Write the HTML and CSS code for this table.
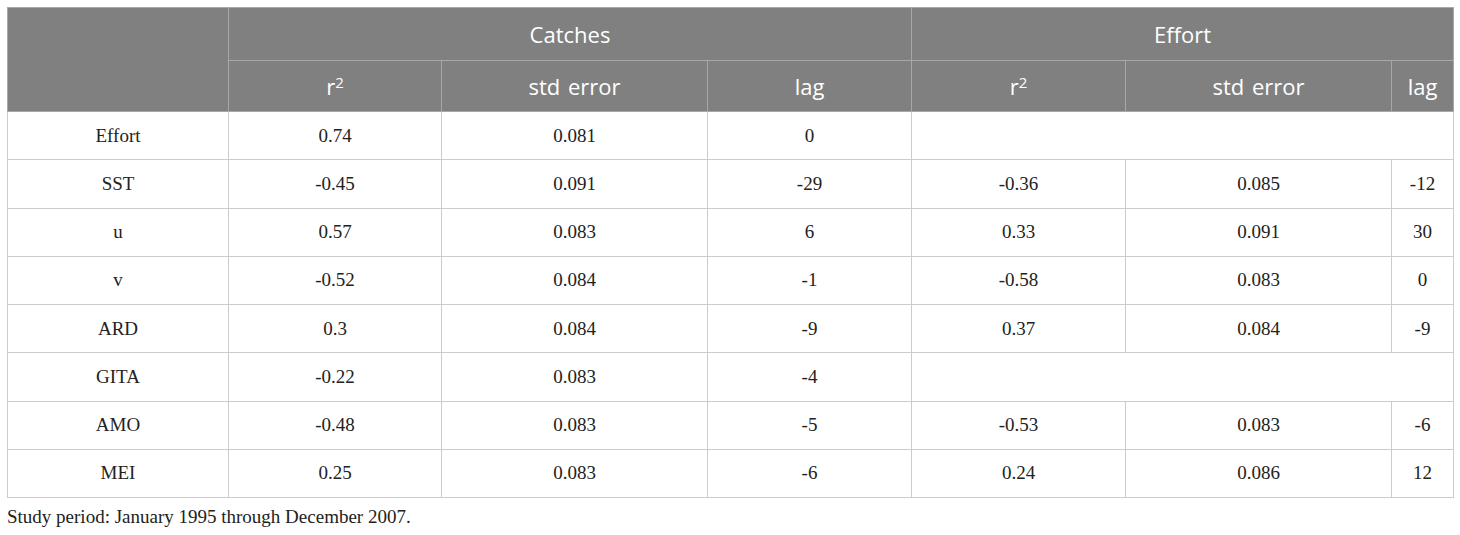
FILE: index.html
```html
<!DOCTYPE html>
<html>
<head>
<meta charset="utf-8">
<link rel="stylesheet" href="styles.css">
</head>
<body>
<div class="wrap">
<table class="data">
  <colgroup>
    <col class="c0"><col class="c1"><col class="c2"><col class="c3"><col class="c4"><col class="c5"><col class="c6">
  </colgroup>
  <thead>
    <tr class="h1">
      <th rowspan="2"></th>
      <th colspan="3">Catches</th>
      <th colspan="3">Effort</th>
    </tr>
    <tr class="h2">
      <th>r<sup>2</sup></th>
      <th>std error</th>
      <th>lag</th>
      <th>r<sup>2</sup></th>
      <th>std error</th>
      <th>lag</th>
    </tr>
  </thead>
  <tbody>
    <tr><td>Effort</td><td>0.74</td><td>0.081</td><td>0</td><td colspan="3"></td></tr>
    <tr><td>SST</td><td>-0.45</td><td>0.091</td><td>-29</td><td>-0.36</td><td>0.085</td><td>-12</td></tr>
    <tr><td>u</td><td>0.57</td><td>0.083</td><td>6</td><td>0.33</td><td>0.091</td><td>30</td></tr>
    <tr><td>v</td><td>-0.52</td><td>0.084</td><td>-1</td><td>-0.58</td><td>0.083</td><td>0</td></tr>
    <tr><td>ARD</td><td>0.3</td><td>0.084</td><td>-9</td><td>0.37</td><td>0.084</td><td>-9</td></tr>
    <tr><td>GITA</td><td>-0.22</td><td>0.083</td><td>-4</td><td colspan="3"></td></tr>
    <tr><td>AMO</td><td>-0.48</td><td>0.083</td><td>-5</td><td>-0.53</td><td>0.083</td><td>-6</td></tr>
    <tr><td>MEI</td><td>0.25</td><td>0.083</td><td>-6</td><td>0.24</td><td>0.086</td><td>12</td></tr>
  </tbody>
</table>
<p class="note">Study period: January 1995 through December 2007.</p>
</div>
</body>
</html>
```
FILE: styles.css
```css
html, body {
  margin: 0;
  padding: 0;
  background: #ffffff;
}
.wrap {
  padding: 7px 0 0 7px;
}
.data {
  border-collapse: collapse;
  table-layout: fixed;
  width: 1446px;
}
.c0 { width: 221px; }
.c1 { width: 213px; }
.c2 { width: 266px; }
.c3 { width: 204px; }
.c4 { width: 214px; }
.c5 { width: 266px; }
.c6 { width: 62px; }
.data th {
  background: #808080;
  color: #ffffff;
  font-family: "Open Sans", "Noto Sans", sans-serif;
  font-weight: normal;
  font-size: 22px;
  word-spacing: 2px;
  text-align: center;
  vertical-align: middle;
  border: 1px solid #a8a8a8;
  padding: 0;
}
.data th sup {
  font-size: 15px;
  line-height: 0;
  vertical-align: 7px;
}
.h1 th { height: 52px; }
.h2 th { height: 50px; }
.data td {
  font-family: "Liberation Serif", "Times New Roman", serif;
  font-size: 19px;
  color: #222222;
  text-align: center;
  vertical-align: middle;
  border: 1px solid #cccccc;
  height: 47.25px;
  padding: 0;
}
.note {
  margin: 8px 0 0 0;
  font-family: "Liberation Serif", "Times New Roman", serif;
  font-size: 19px;
  color: #222222;
}
```
